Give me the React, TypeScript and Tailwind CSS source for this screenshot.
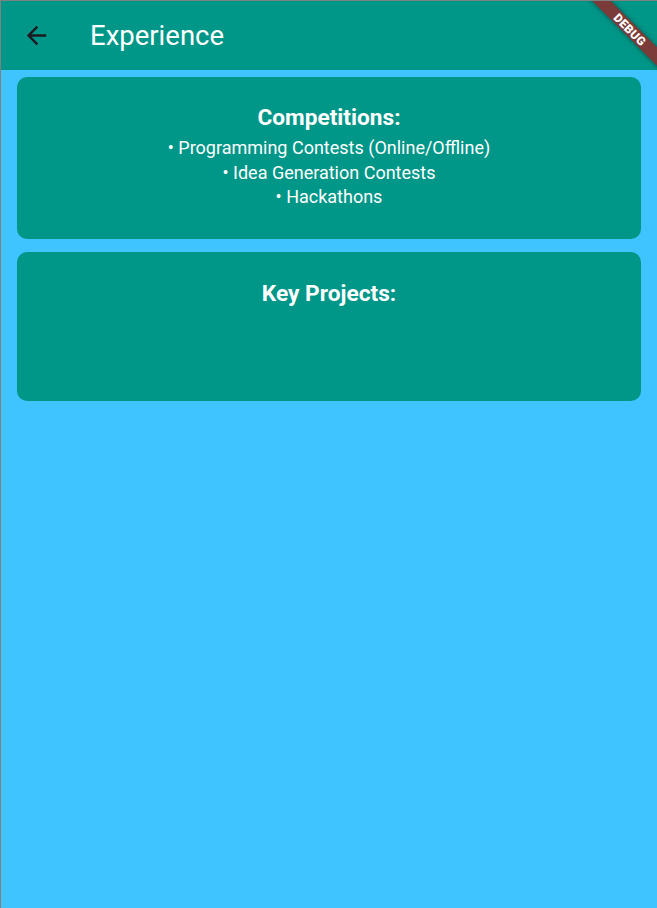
import React from 'react';

const COMPETITIONS = [
  'Programming Contests (Online/Offline)',
  'Idea Generation Contests',
  'Hackathons',
];

function BackArrow() {
  return (
    <svg viewBox="0 0 24 24" className="w-[29px] h-[29px]" fill="#1d1b20">
      <path d="M20 11H7.83l5.59-5.59L12 4l-8 8 8 8 1.41-1.41L7.83 13H20v-2z" />
    </svg>
  );
}

export default function App() {
  return (
    <div className="relative w-[657px] h-[908px] overflow-hidden bg-[#40c4ff] border-l border-t border-[#808080] font-['Roboto',sans-serif]">
      {/* App bar */}
      <div className="h-[69px] bg-[#009688] flex items-center">
        <div className="ml-[21px]">
          <BackArrow />
        </div>
        <h1 className="ml-[39px] text-[27.5px] text-white leading-none">Experience</h1>
      </div>

      {/* Cards */}
      <div className="px-4 pt-[7px] flex flex-col gap-[13px]">
        <div className="h-[162px] rounded-[10px] bg-[#009688] text-white text-center pt-[27px]">
          <div className="text-[22.7px] font-bold leading-[28px]">Competitions:</div>
          <div className="mt-[4px] text-[18px] leading-[24.5px]">
            {COMPETITIONS.map((c) => (
              <div key={c}>• {c}</div>
            ))}
          </div>
        </div>

        <div className="h-[149px] rounded-[10px] bg-[#009688] text-white text-center pt-[28px]">
          <div className="text-[22.7px] font-bold leading-[28px]">Key Projects:</div>
        </div>
      </div>

      {/* Debug banner */}
      <div className="absolute left-[569px] top-[22px] w-[120px] h-[13px] rotate-45 bg-[#7b3b38] shadow-[0_0_5px_rgba(0,0,0,0.45)] flex items-center justify-center">
        <span className="text-[12px] font-black text-white leading-none tracking-[0.3px]">DEBUG</span>
      </div>
    </div>
  );
}
